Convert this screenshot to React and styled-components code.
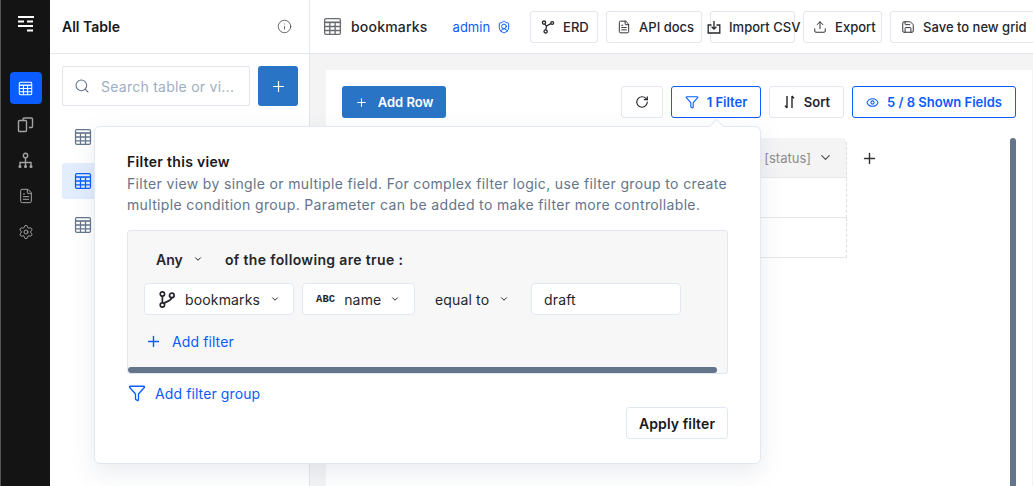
import styled, { createGlobalStyle } from "styled-components"
import {
  Info, Search, Plus, FileText, Settings, ShieldUser, Upload, Save,
  RotateCw, Funnel, Eye, ChevronDown,
} from "lucide-react"

const Global = createGlobalStyle`
  html, body { margin: 0; height: 100%; overflow: hidden; }
  body { font-family: "Inter", "Liberation Sans", sans-serif; background: #fff; color: #17181c; }
  * { box-sizing: border-box; }
`
const Page = styled.div`
  position: relative;
  display: flex;
  width: 1033px;
  height: 486px;
  overflow: hidden;
`
const Rail = styled.nav`
  width: 50px;
  flex: none;
  background: #141414;
  border-left: 1px solid #555;
  display: flex;
  flex-direction: column;
  align-items: center;
  padding: 15px 0 0 0;
`
const RailLogo = styled.div`
  height: 57px;
  color: #fff;
`
const RailItem = styled.div`
  width: 32px;
  height: 32px;
  margin-bottom: 4px;
  border-radius: 4px;
  display: flex;
  align-items: center;
  justify-content: center;
  background: ${(p) => (p.$active ? "#0a5cff" : "transparent")};
  color: ${(p) => (p.$active ? "#fff" : "#a3a3a3")};
`
const Sidebar = styled.aside`
  width: 260px;
  flex: none;
  border-right: 1px solid #e2e6ee;
`
const SidebarHead = styled.div`
  height: 54px;
  border-bottom: 1px solid #e2e6ee;
  display: flex;
  align-items: center;
  justify-content: space-between;
  padding: 0 17px 0 12px;
  font-size: 14px;
  font-weight: 600;
  color: #5f6066;
`
const SidebarTitle = styled.span`
  color: #17181c;
`
const SearchRow = styled.div`
  display: flex;
  gap: 8px;
  padding: 12px 0 0 12px;
`
const SearchBox = styled.div`
  width: 188px;
  height: 40px;
  flex: none;
  border: 1px solid #e0e5ee;
  border-radius: 2px;
  display: flex;
  align-items: center;
  gap: 11px;
  padding: 0 11px;
  color: #64748b;
`
const Placeholder = styled.span`
  font-size: 14px;
  color: #a0aec0;
  letter-spacing: 0.25px;
  white-space: nowrap;
`
const AddSquare = styled.div`
  width: 40px;
  height: 40px;
  flex: none;
  border-radius: 3px;
  background: #2a74c6;
  color: #fff;
  display: flex;
  align-items: center;
  justify-content: center;
`
const TableList = styled.div`
  display: flex;
  flex-direction: column;
  gap: 8px;
  padding: 13px 12px 0;
`
const TableRow = styled.div`
  height: 36px;
  border-radius: 3px;
  padding-left: 12px;
  display: flex;
  align-items: center;
  color: ${(p) => (p.$active ? "#0a5cff" : "#64748b")};
  background: ${(p) => (p.$active ? "#e2edfd" : "transparent")};
`
const Main = styled.main`
  flex: 1;
  min-width: 0;
  display: flex;
  flex-direction: column;
`
const Header = styled.header`
  height: 54px;
  flex: none;
  border-bottom: 1px solid #e2e6ee;
  display: flex;
  align-items: center;
  padding: 0 0 0 13px;
  overflow: hidden;
`
const CrumbIcon = styled.span`
  display: flex;
  color: #6a6b70;
`
const Crumb = styled.span`
  margin-left: 9px;
  font-size: 14px;
  font-weight: 500;
  letter-spacing: 0.2px;
  color: #25262b;
`
const Admin = styled.span`
  display: flex;
  align-items: center;
  gap: 7px;
  margin: 0 19px 0 25px;
  font-size: 13px;
  color: #0a5cff;
`
const HeadButtons = styled.div`
  display: flex;
  gap: 8px;
  flex: none;
`
const HeadButton = styled.div`
  width: ${(p) => p.$w}px;
  height: 32px;
  flex: none;
  border: 1px solid #e2e6ee;
  border-radius: 3px;
  background: #fff;
  display: flex;
  align-items: center;
  gap: 8px;
  padding-left: ${(p) => p.$pad ?? 10}px;
  font-size: 13px;
  font-weight: 500;
  color: #25262b;
  white-space: nowrap;
`
const Overhang = styled.span`
  display: flex;
  margin-left: -4px;
`
const Content = styled.div`
  flex: 1;
  background: #f4f4f5;
  padding: 16px 1px 0 16px;
  min-height: 0;
`
const Card = styled.section`
  position: relative;
  height: 100%;
  background: #fff;
  padding: 16px;
`
const Toolbar = styled.div`
  display: flex;
  align-items: center;
  height: 32px;
`
const AddRow = styled.div`
  width: 104px;
  height: 32px;
  border-radius: 3px;
  background: #2a74c6;
  color: #fff;
  display: flex;
  align-items: center;
  justify-content: center;
  gap: 10px;
  font-size: 13px;
  font-weight: 600;
`
const ToolGroup = styled.div`
  margin-left: auto;
  display: flex;
  gap: 8px;
`
const ToolButton = styled.div`
  width: ${(p) => p.$w}px;
  height: 32px;
  border: 1px solid ${(p) => (p.$on ? "#0a5cff" : "#e2e6ee")};
  border-radius: 3px;
  display: flex;
  align-items: center;
  justify-content: center;
  gap: 8px;
  font-size: 13px;
  font-weight: 600;
  color: ${(p) => (p.$on ? "#0a5cff" : "#25262b")};
  white-space: nowrap;
`
const GridWrap = styled.div`
  display: flex;
  align-items: flex-start;
  margin-top: 20px;
`
const Grid = styled.div`
  width: 505px;
  flex: none;
`
const GridHead = styled.div`
  height: 40px;
  background: #f4f4f5;
  border-bottom: 1px solid #e6e7ea;
  border-right: 1px dashed #dcdde0;
  border-top-right-radius: 6px;
  display: flex;
  align-items: center;
  justify-content: flex-end;
  gap: 7px;
  padding-right: 13px;
  font-size: 13px;
  color: #8b8c90;
  svg { color: #555; }
`
const GridRow = styled.div`
  height: 40px;
  border-bottom: 1px solid #e6e7ea;
  border-right: 1px dashed #dcdde0;
`
const GridAdd = styled.div`
  margin: 12px 0 0 14px;
  display: flex;
  color: #333;
`
const ScrollThumb = styled.div`
  position: absolute;
  top: 68px;
  bottom: 0;
  right: 16px;
  width: 6px;
  border-radius: 3px 3px 0 0;
  background: #64748b;
`
const Popover = styled.div`
  position: absolute;
  left: 94px;
  top: 126px;
  width: 667px;
  height: 338px;
  background: #fff;
  border: 1px solid #e2e8f2;
  border-radius: 6px;
  box-shadow: 0 8px 24px rgba(100, 116, 139, 0.14);
  padding: 26px 32px 0;
  &::before {
    content: "";
    position: absolute;
    top: -6px;
    left: 616px;
    width: 10px;
    height: 10px;
    background: #fff;
    border-left: 1px solid #e2e8f2;
    border-top: 1px solid #e2e8f2;
    transform: rotate(45deg);
  }
`
const PopTitle = styled.div`
  font-size: 14px;
  font-weight: 600;
  line-height: 18px;
  letter-spacing: 0.3px;
`
const PopDesc = styled.p`
  margin: 2px 0 0;
  font-size: 14px;
  line-height: 21px;
  letter-spacing: 0.35px;
  color: #64748b;
  white-space: nowrap;
`
const GroupBox = styled.div`
  position: relative;
  margin-top: 15px;
  height: 144px;
  background: #f7f7f8;
  border: 1px solid #e2e6ee;
  border-radius: 3px;
  padding: 0 16px;
  overflow: hidden;
`
const LogicRow = styled.div`
  display: flex;
  align-items: center;
  height: 52px;
  padding: 4px 0 0 12px;
  font-size: 14px;
  font-weight: 600;
  color: #25262b;
`
const LogicAny = styled.span`
  display: flex;
  align-items: center;
  gap: 10px;
  width: 69px;
`
const LogicText = styled.span`
  letter-spacing: 0.35px;
`
const ConditionRow = styled.div`
  display: flex;
  align-items: center;
  gap: 8px;
`
const Select = styled.div`
  width: ${(p) => p.$w}px;
  height: 32px;
  background: #fff;
  border: 1px solid #e2e8f2;
  border-radius: 4px;
  display: flex;
  align-items: center;
  gap: ${(p) => p.$gap || 10}px;
  padding-left: ${(p) => p.$pad || 14}px;
  font-size: 14px;
  letter-spacing: 0.15px;
  color: #25262b;
`
const AbcTag = styled.span`
  font-family: "Liberation Mono", monospace;
  font-size: 10.5px;
  font-weight: 700;
  letter-spacing: 0.1px;
`
const Operator = styled.div`
  display: flex;
  align-items: center;
  gap: 10px;
  width: 100px;
  padding-left: 12px;
  font-size: 14px;
  letter-spacing: 0.15px;
  color: #25262b;
  white-space: nowrap;
`
const ValueInput = styled.div`
  width: 150px;
  height: 32px;
  background: #fff;
  border: 1px solid #e2e8f2;
  border-radius: 4px;
  display: flex;
  align-items: center;
  padding-left: 12px;
  font-size: 14px;
  letter-spacing: 0.15px;
  color: #25262b;
`
const LinkRow = styled.div`
  display: flex;
  align-items: center;
  gap: ${(p) => p.$gap}px;
  height: ${(p) => p.$h}px;
  margin: ${(p) => p.$m};
  font-size: 14px;
  letter-spacing: 0.1px;
  color: #0a5cff;
`
const HScroll = styled.div`
  position: absolute;
  left: 0;
  bottom: 0;
  width: 589px;
  height: 6px;
  border-radius: 3px;
  background: #64748b;
`
const PopFooter = styled.div`
  display: flex;
  justify-content: flex-end;
  margin-top: 5px;
`
const ApplyButton = styled.div`
  width: 102px;
  height: 32px;
  border: 1px solid #e2e8f2;
  border-radius: 3px;
  display: flex;
  align-items: center;
  justify-content: center;
  font-size: 14px;
  font-weight: 600;
  letter-spacing: 0.1px;
`

function TableIcon({ size = 20 }) {
  return (
    <svg width={size} height={size} viewBox="0 0 20 20" fill="none" stroke="currentColor" strokeWidth="1.4">
      <rect x="1.7" y="1.7" width="16.6" height="16.6" rx="1.5" />
      <path d="M1.7 5.6h16.6" strokeWidth="1.8" />
      <path d="M1.7 10h16.6M1.7 14.2h16.6M7.2 5.8v12.5M12.8 5.8v12.5" />
    </svg>
  )
}

function Logo() {
  return (
    <svg width="16" height="17" viewBox="0 0 16 17" fill="none" stroke="currentColor" strokeWidth="2">
      <path d="M0 2h16" />
      <path d="M0 6.5h6M9 6.5h6" />
      <path d="M0 11h15" />
      <path d="M9 15.5h6" />
    </svg>
  )
}

function PagesIcon() {
  return (
    <svg width="17" height="17" viewBox="0 0 17 17" fill="none" stroke="currentColor" strokeWidth="1.4">
      <path d="M6 4V3a1 1 0 0 1 1-1h7.5a1 1 0 0 1 1 1v7.5a1 1 0 0 1-1 1H12" />
      <rect x="1.5" y="4.5" width="8" height="11" rx="1" />
    </svg>
  )
}

function TreeIcon() {
  return (
    <svg width="17" height="17" viewBox="0 0 17 17" fill="none" stroke="currentColor" strokeWidth="1.4">
      <circle cx="8.5" cy="3.5" r="2.2" />
      <path d="M8.5 5.7v8M3 13.5v-3h11v3" />
      <circle cx="3" cy="14.5" r="0.9" fill="currentColor" />
      <circle cx="8.5" cy="14.5" r="0.9" fill="currentColor" />
      <circle cx="14" cy="14.5" r="0.9" fill="currentColor" />
    </svg>
  )
}

function ErdIcon() {
  return (
    <svg width="14" height="14" viewBox="0 0 14 14" fill="none" stroke="currentColor" strokeWidth="1.3">
      <circle cx="3" cy="2.6" r="1.6" />
      <circle cx="11.2" cy="3" r="1.4" />
      <circle cx="4.6" cy="11.4" r="1.6" />
      <path d="M3.6 4.1l1.9 1.9 4.3-2.4M5.5 6 4.8 9.8" />
    </svg>
  )
}

function ImportIcon() {
  return (
    <svg width="14" height="14" viewBox="0 0 14 14" fill="none" stroke="currentColor" strokeWidth="1.3">
      <path d="M4.5 5H1.2v8h11.6V5H9.5" />
      <path d="M7 1v8M4.6 6.8 7 9.2l2.4-2.4" />
    </svg>
  )
}

function SortIcon() {
  return (
    <svg width="13" height="14" viewBox="0 0 13 14" fill="none" stroke="currentColor" strokeWidth="1.4">
      <path d="M4 1v12M4 13 2 10.6" />
      <path d="M9 13V1M9 1l2 2.4" />
    </svg>
  )
}

function SourceIcon() {
  return (
    <svg width="16" height="17" viewBox="0 0 16 17" fill="none" stroke="currentColor" strokeWidth="1.7">
      <circle cx="3.4" cy="3" r="2.2" />
      <circle cx="3.4" cy="14" r="2.2" />
      <circle cx="12.8" cy="4.4" r="2.3" />
      <path d="M3.4 5.2v6.6M12.5 6.8c-.4 3.4-5 3.2-7.4 5.6" />
    </svg>
  )
}

export default function App() {
  return (
    <Page>
      <Global />
      <Rail>
        <RailLogo><Logo /></RailLogo>
        <RailItem $active><TableIcon size={15} /></RailItem>
        <RailItem><PagesIcon /></RailItem>
        <RailItem><TreeIcon /></RailItem>
        <RailItem><FileText size={16} strokeWidth={1.5} /></RailItem>
        <RailItem><Settings size={16} strokeWidth={1.5} /></RailItem>
      </Rail>

      <Sidebar>
        <SidebarHead>
          <SidebarTitle>All Table</SidebarTitle>
          <Info size={15} strokeWidth={1.5} />
        </SidebarHead>
        <SearchRow>
          <SearchBox>
            <Search size={16} strokeWidth={1.6} />
            <Placeholder>Search table or vi...</Placeholder>
          </SearchBox>
          <AddSquare><Plus size={17} strokeWidth={1.7} /></AddSquare>
        </SearchRow>
        <TableList>
          <TableRow><TableIcon size={18} /></TableRow>
          <TableRow $active><TableIcon size={18} /></TableRow>
          <TableRow><TableIcon size={18} /></TableRow>
        </TableList>
      </Sidebar>

      <Main>
        <Header>
          <CrumbIcon><TableIcon size={19} /></CrumbIcon>
          <Crumb>bookmarks</Crumb>
          <Admin>admin <ShieldUser size={14} strokeWidth={1.7} /></Admin>
          <HeadButtons>
            <HeadButton $w={68}><ErdIcon />ERD</HeadButton>
            <HeadButton $w={96}><FileText size={14} strokeWidth={1.6} />API docs</HeadButton>
            <HeadButton $w={85} $pad={0}><Overhang><ImportIcon /></Overhang>Import CSV</HeadButton>
            <HeadButton $w={79} $pad={9}><Upload size={14} strokeWidth={1.6} />Export</HeadButton>
            <HeadButton $w={150}><Save size={14} strokeWidth={1.6} />Save to new grid</HeadButton>
          </HeadButtons>
        </Header>
        <Content>
          <Card>
            <Toolbar>
              <AddRow><Plus size={13} strokeWidth={2} />Add Row</AddRow>
              <ToolGroup>
                <ToolButton $w={42}><RotateCw size={14} strokeWidth={2} /></ToolButton>
                <ToolButton $w={90} $on><Funnel size={14} strokeWidth={1.9} />1 Filter</ToolButton>
                <ToolButton $w={75}><SortIcon />Sort</ToolButton>
                <ToolButton $w={164} $on><Eye size={13} strokeWidth={1.9} />5 / 8 Shown Fields</ToolButton>
              </ToolGroup>
            </Toolbar>
            <GridWrap>
              <Grid>
                <GridHead>[status]<ChevronDown size={15} strokeWidth={2} /></GridHead>
                <GridRow />
                <GridRow />
              </Grid>
              <GridAdd><Plus size={17} strokeWidth={2} /></GridAdd>
            </GridWrap>
            <ScrollThumb />
          </Card>
        </Content>
      </Main>

      <Popover>
        <PopTitle>Filter this view</PopTitle>
        <PopDesc>
          Filter view by single or multiple field. For complex filter logic, use filter group to create
          <br />
          multiple condition group. Parameter can be added to make filter more controllable.
        </PopDesc>
        <GroupBox>
          <LogicRow>
            <LogicAny>Any <ChevronDown size={10} strokeWidth={2.4} /></LogicAny>
            <LogicText>of the following are true :</LogicText>
          </LogicRow>
          <ConditionRow>
            <Select $w={150}>
              <SourceIcon />bookmarks<ChevronDown size={10} strokeWidth={2.4} />
            </Select>
            <Select $w={113} $pad={13} $gap={9}>
              <AbcTag>ABC</AbcTag>name<ChevronDown size={10} strokeWidth={2.4} />
            </Select>
            <Operator>equal to <ChevronDown size={10} strokeWidth={2.4} /></Operator>
            <ValueInput>draft</ValueInput>
          </ConditionRow>
          <LinkRow $gap={10} $h={17} $m="18px 0 0 1px"><Plus size={17} strokeWidth={2} />Add filter</LinkRow>
          <HScroll />
        </GroupBox>
        <LinkRow $gap={9} $h={18} $m="10px 0 0 1px"><Funnel size={18} strokeWidth={1.8} />Add filter group</LinkRow>
        <PopFooter><ApplyButton>Apply filter</ApplyButton></PopFooter>
      </Popover>
    </Page>
  )
}
